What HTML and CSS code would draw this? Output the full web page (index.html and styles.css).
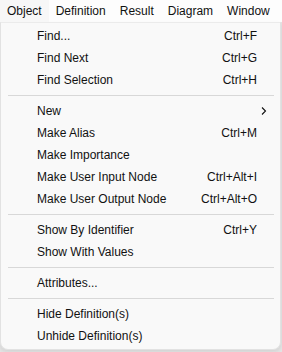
FILE: index.html
```html
<!DOCTYPE html>
<html lang="en">

<head>
  <meta charset="UTF-8">
  <title>Object menu</title>
  <link rel="stylesheet" href="styles.css">
</head>

<body>
  <nav class="menubar">
    <span class="menubar-item open">Object</span>
    <span class="menubar-item">Definition</span>
    <span class="menubar-item">Result</span>
    <span class="menubar-item">Diagram</span>
    <span class="menubar-item">Window</span>
  </nav>

  <ul class="menu">
    <li class="item"><span>Find...</span><kbd>Ctrl+F</kbd></li>
    <li class="item"><span>Find Next</span><kbd>Ctrl+G</kbd></li>
    <li class="item"><span>Find Selection</span><kbd>Ctrl+H</kbd></li>
    <li class="sep"></li>
    <li class="item submenu">
      <span>New</span>
      <svg class="arrow" viewBox="0 0 6 10" fill="none" stroke="currentColor" stroke-width="1.1">
        <polyline points="1,1.5 4.5,5 1,8.5"></polyline>
      </svg>
    </li>
    <li class="item"><span>Make Alias</span><kbd>Ctrl+M</kbd></li>
    <li class="item"><span>Make Importance</span></li>
    <li class="item"><span>Make User Input Node</span><kbd>Ctrl+Alt+I</kbd></li>
    <li class="item"><span>Make User Output Node</span><kbd>Ctrl+Alt+O</kbd></li>
    <li class="sep"></li>
    <li class="item"><span>Show By Identifier</span><kbd>Ctrl+Y</kbd></li>
    <li class="item"><span>Show With Values</span></li>
    <li class="sep"></li>
    <li class="item"><span>Attributes...</span></li>
    <li class="sep"></li>
    <li class="item"><span>Hide Definition(s)</span></li>
    <li class="item"><span>Unhide Definition(s)</span></li>
  </ul>
</body>

</html>
```

FILE: styles.css
```css
body {
  margin: 0;
  font-family: "Liberation Sans", Arial, sans-serif;
  font-size: 12px;
  color: #111;
  background: #e4e4e4;
  height: 352px;
  overflow: hidden;
}

.menubar {
  display: flex;
  height: 22px;
  background: #fdfdfd;
}

.menubar-item {
  display: flex;
  align-items: center;
  padding: 0 7px 1px;
}

.menubar-item.open {
  background: #f7f7f7;
}

.menu {
  list-style: none;
  margin: 0 1px 0 0;
  padding: 2px 0 2px;
  background: #f9f9f9;
  border: 1px solid #e2e2e2;
  border-top-color: #ebebeb;
  border-radius: 0 0 8px 8px;
  box-shadow: 0 2px 4px rgba(0, 0, 0, 0.08);
}

.item {
  display: flex;
  align-items: center;
  justify-content: space-between;
  height: 22px;
  padding: 0 23px 0 36px;
}

.item kbd {
  font-family: inherit;
  font-size: 12px;
}

.submenu {
  padding-right: 13px;
}

.arrow {
  width: 6px;
  height: 10px;
}

.sep {
  height: 1px;
  margin: 4px 6px 4px 7px;
  background: #d8d8d8;
}
```
